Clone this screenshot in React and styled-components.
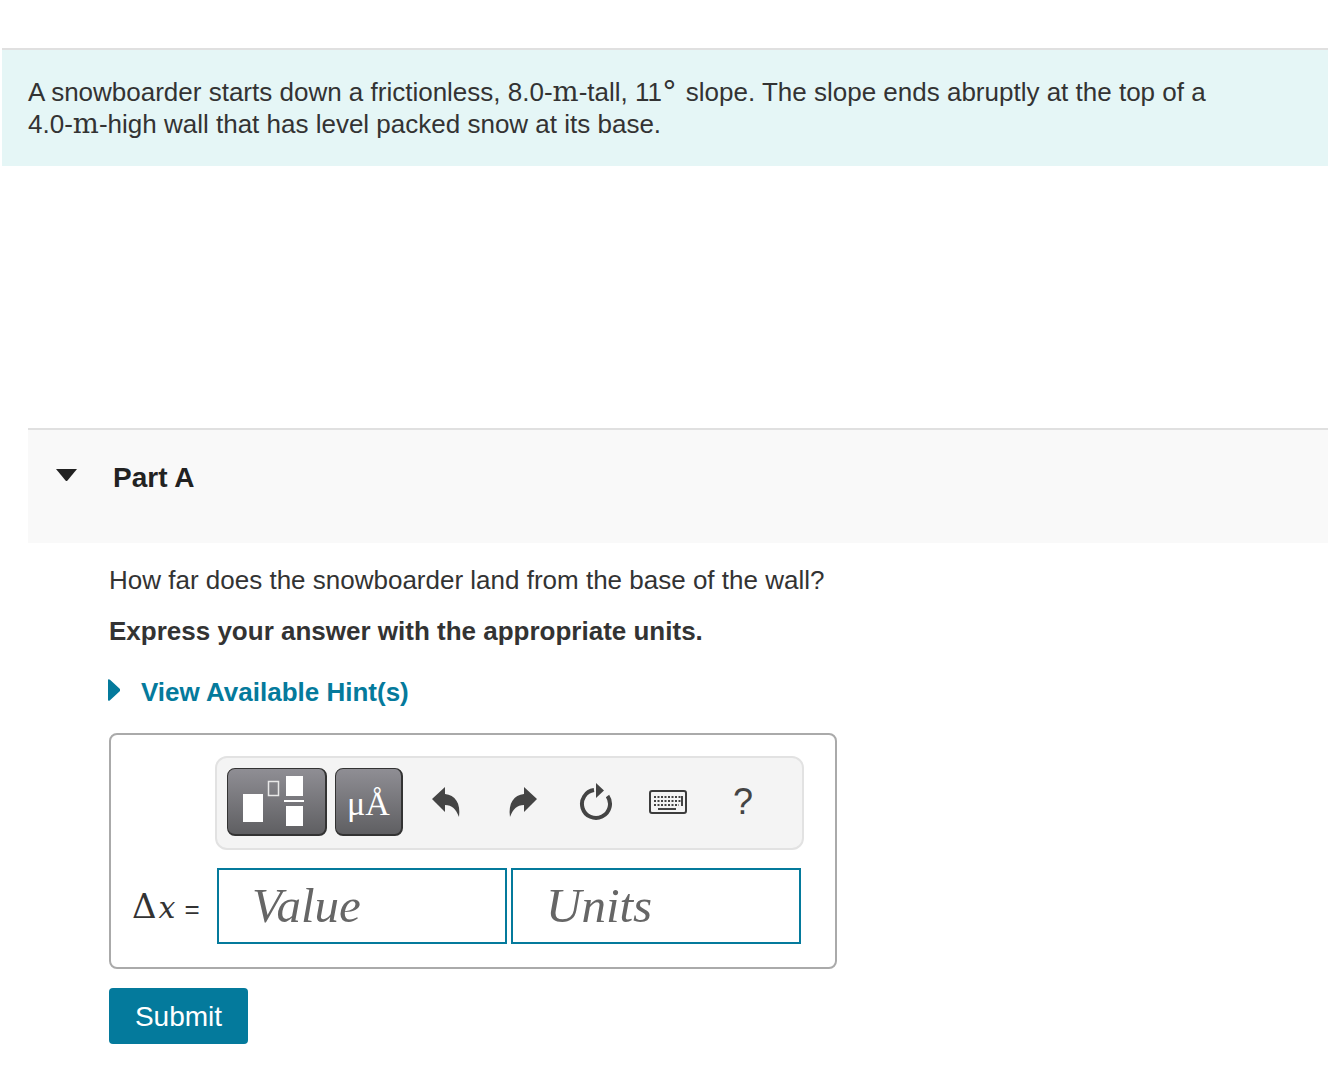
import React from "react";
import styled, { createGlobalStyle } from "styled-components";

const Global = createGlobalStyle`
  html, body { margin: 0; padding: 0; background: #fff; }
  body { font-family: "Liberation Sans", Arial, sans-serif; color: #333; }
`;
const Page = styled.div`
  width: 1328px; height: 1074px; padding-top: 48px; box-sizing: border-box; overflow: hidden;
`;
const Intro = styled.div`
  margin-left: 2px; height: 116px; border-top: 2px solid #e0e0e0;
  background: #e5f6f6; padding: 0 26px; font-size: 26px; line-height: 32px;
  display: flex; flex-direction: column; justify-content: center;
`;
const Line = styled.div` white-space: nowrap; height: 32px; `;
const Unit = styled.span` font-family: "DejaVu Serif", serif; font-size: 27.5px; line-height: 0; `;
const Deg = styled.span`
  font-family: "DejaVu Sans", sans-serif; font-size: 30px; line-height: 0;
  position: relative; top: -7px; margin-left: -2px; margin-right: 7px;
`;
const PartBlock = styled.section` margin-left: 28px; margin-top: 262px; `;
const PartHead = styled.div`
  border-top: 2px solid #e0e0e0; background: #f9f9f9;
  display: flex; align-items: flex-start; padding: 29px 0 0 28px; height: 84px;
`;
const Caret = styled.svg` width: 21px; height: 12px; margin-top: 10px; flex: none; display: block; `;
const PartTitle = styled.h2`
  margin: 0 0 0 36px; font-size: 28px; line-height: 38px; font-weight: 700; color: #222;
`;
const Body = styled.div` padding: 21px 0 0 81px; width: 727px; `;
const Question = styled.p` margin: 0; font-size: 26px; line-height: 32px; white-space: nowrap; `;
const Strong = styled(Question)` margin-top: 19px; font-weight: 700; `;
const Hint = styled.div`
  margin-top: 29px; display: flex; align-items: center; height: 32px;
  color: #047a9c; font-size: 26px; font-weight: 700; white-space: nowrap;
`;
const HintCaret = styled.svg` width: 12px; height: 22px; margin: -4px 21px 0 -1px; display: block; `;
const AnswerBox = styled.div`
  margin-top: 25px; width: 728px; height: 236px; box-sizing: border-box;
  border: 2px solid #aaa; border-radius: 8px; padding: 21px 0 0 21px;
`;
const Toolbar = styled.div`
  margin-left: 83px; width: 589px; height: 94px; box-sizing: border-box;
  background: #f4f4f4; border: 2px solid #e2e2e2; border-radius: 12px;
  display: flex; align-items: center; padding: 0 0 2px 10px;
`;
const TplButton = styled.div`
  width: ${p => p.$w}px; height: 68px; box-sizing: border-box; margin-right: 8px; flex: none;
  border-radius: 8px; border: 1px solid #333; border-bottom-width: 2px; border-right-width: 2px;
  background: linear-gradient(#8f8e94, #5f5f62); display: flex; align-items: center; justify-content: center;
  color: #fff; font-family: "Liberation Serif", serif; font-size: 34px;
`;
const Glyphs = styled.span` padding-top: 5px; `;
const ToolIcon = styled.svg` flex: none; display: block; margin-left: ${p => p.$ml}px; `;
const ToolHelp = styled.span`
  font-size: 36px; color: #444; margin-left: 46px; line-height: 40px;
`;
const InputRow = styled.div` display: flex; align-items: center; margin-top: 18px; `;
const Label = styled.div`
  width: 85px; flex: none; font-family: "DejaVu Serif", serif; font-size: 34px; color: #333;
  white-space: nowrap; display: flex; align-items: baseline;
`;
const Var = styled.i` font-size: 30px; margin-left: 2px; `;
const Eq = styled.span` font-family: "Liberation Sans", sans-serif; font-size: 26px; margin-left: 9px; `;
const Field = styled.div`
  width: 290px; height: 76px; box-sizing: border-box; border: 2px solid #047a9c; background: #fff;
  margin-right: 4px; flex: none; padding: 0 0 2px 33px; display: flex; align-items: center;
  font-family: "Liberation Serif", serif; font-style: italic; font-size: 49px; color: #666;
`;
const Submit = styled.button`
  display: block; margin-top: 19px; width: 139px; height: 56px; border: 0; border-radius: 4px;
  background: #047a9c; color: #fff; font: 400 28px "Liberation Sans", sans-serif; padding: 2px 0 0;
`;

export default function App() {
  return (
    <Page>
      <Global />
      <Intro>
        <Line>A snowboarder starts down a frictionless, 8.0-<Unit>m</Unit>-tall, 11<Deg>∘</Deg>slope. The slope ends abruptly at the top of a</Line>
        <Line>4.0-<Unit>m</Unit>-high wall that has level packed snow at its base.</Line>
      </Intro>
      <PartBlock>
        <PartHead>
          <Caret viewBox="0 0 21 12"><path d="M0 0H21L11.5 11.5a1.3 1.3 0 0 1-2 0Z" fill="#222" /></Caret>
          <PartTitle>Part A</PartTitle>
        </PartHead>
        <Body>
          <Question>How far does the snowboarder land from the base of the wall?</Question>
          <Strong>Express your answer with the appropriate units.</Strong>
          <Hint>
            <HintCaret viewBox="0 0 12 22"><path d="M0 1.5C0 0 1 0 2 .8L12 10a1.3 1.3 0 0 1 0 2L2 21.2C1 22 0 22 0 20.5Z" fill="#047a9c" /></HintCaret>
            View Available Hint(s)
          </Hint>
          <AnswerBox>
            <Toolbar>
              <TplButton $w={100}>
                <svg width="97" height="65" viewBox="0 0 97 65">
                  <rect x="15" y="25" width="20" height="28" fill="#fff" />
                  <rect x="40.5" y="12.5" width="10" height="14" fill="none" stroke="#e8e8e8" strokeWidth="1.5" />
                  <rect x="58" y="7" width="17" height="20" fill="#fff" />
                  <rect x="56" y="31" width="20" height="2" fill="#fff" />
                  <rect x="58" y="37" width="17" height="20" fill="#fff" />
                </svg>
              </TplButton>
              <TplButton $w={68}><Glyphs>μÅ</Glyphs></TplButton>
              <ToolIcon $ml={21} width="30" height="34" viewBox="0 0 30 34">
                <path d="M0 14 13 2V9C23 10 29 18 27 32 24 24 20 20 13 20V27Z" fill="#444" />
              </ToolIcon>
              <ToolIcon $ml={46} width="30" height="34" viewBox="0 0 30 34">
                <path d="M29 14 16 2V9C6 10 0 18 2 32 5 24 9 20 16 20V27Z" fill="#444" />
              </ToolIcon>
              <ToolIcon $ml={41} width="34" height="38" viewBox="0 0 34 38">
                <path d="M28.5 13A14 14 0 1 1 15 7.1" fill="none" stroke="#444" strokeWidth="4" />
                <path d="M17 0 25 7.5 17 15Z" fill="#444" />
              </ToolIcon>
              <ToolIcon $ml={36} width="38" height="24" viewBox="0 0 38 24">
                <rect x="1" y="1" width="36" height="22" rx="2" fill="#f4f4f4" stroke="#3c3c3c" strokeWidth="2" />
                <path d="M5 7H33M5 11H33M5 15H30" stroke="#444" strokeWidth="2" strokeDasharray="2 1.5" />
                <path d="M9 19H27" stroke="#444" strokeWidth="2" />
                <path d="M33 6V16" stroke="#444" strokeWidth="2" />
              </ToolIcon>
              <ToolHelp>?</ToolHelp>
            </Toolbar>
            <InputRow>
              <Label>Δ<Var>x</Var><Eq>=</Eq></Label>
              <Field>Value</Field>
              <Field>Units</Field>
            </InputRow>
          </AnswerBox>
          <Submit>Submit</Submit>
        </Body>
      </PartBlock>
    </Page>
  );
}
